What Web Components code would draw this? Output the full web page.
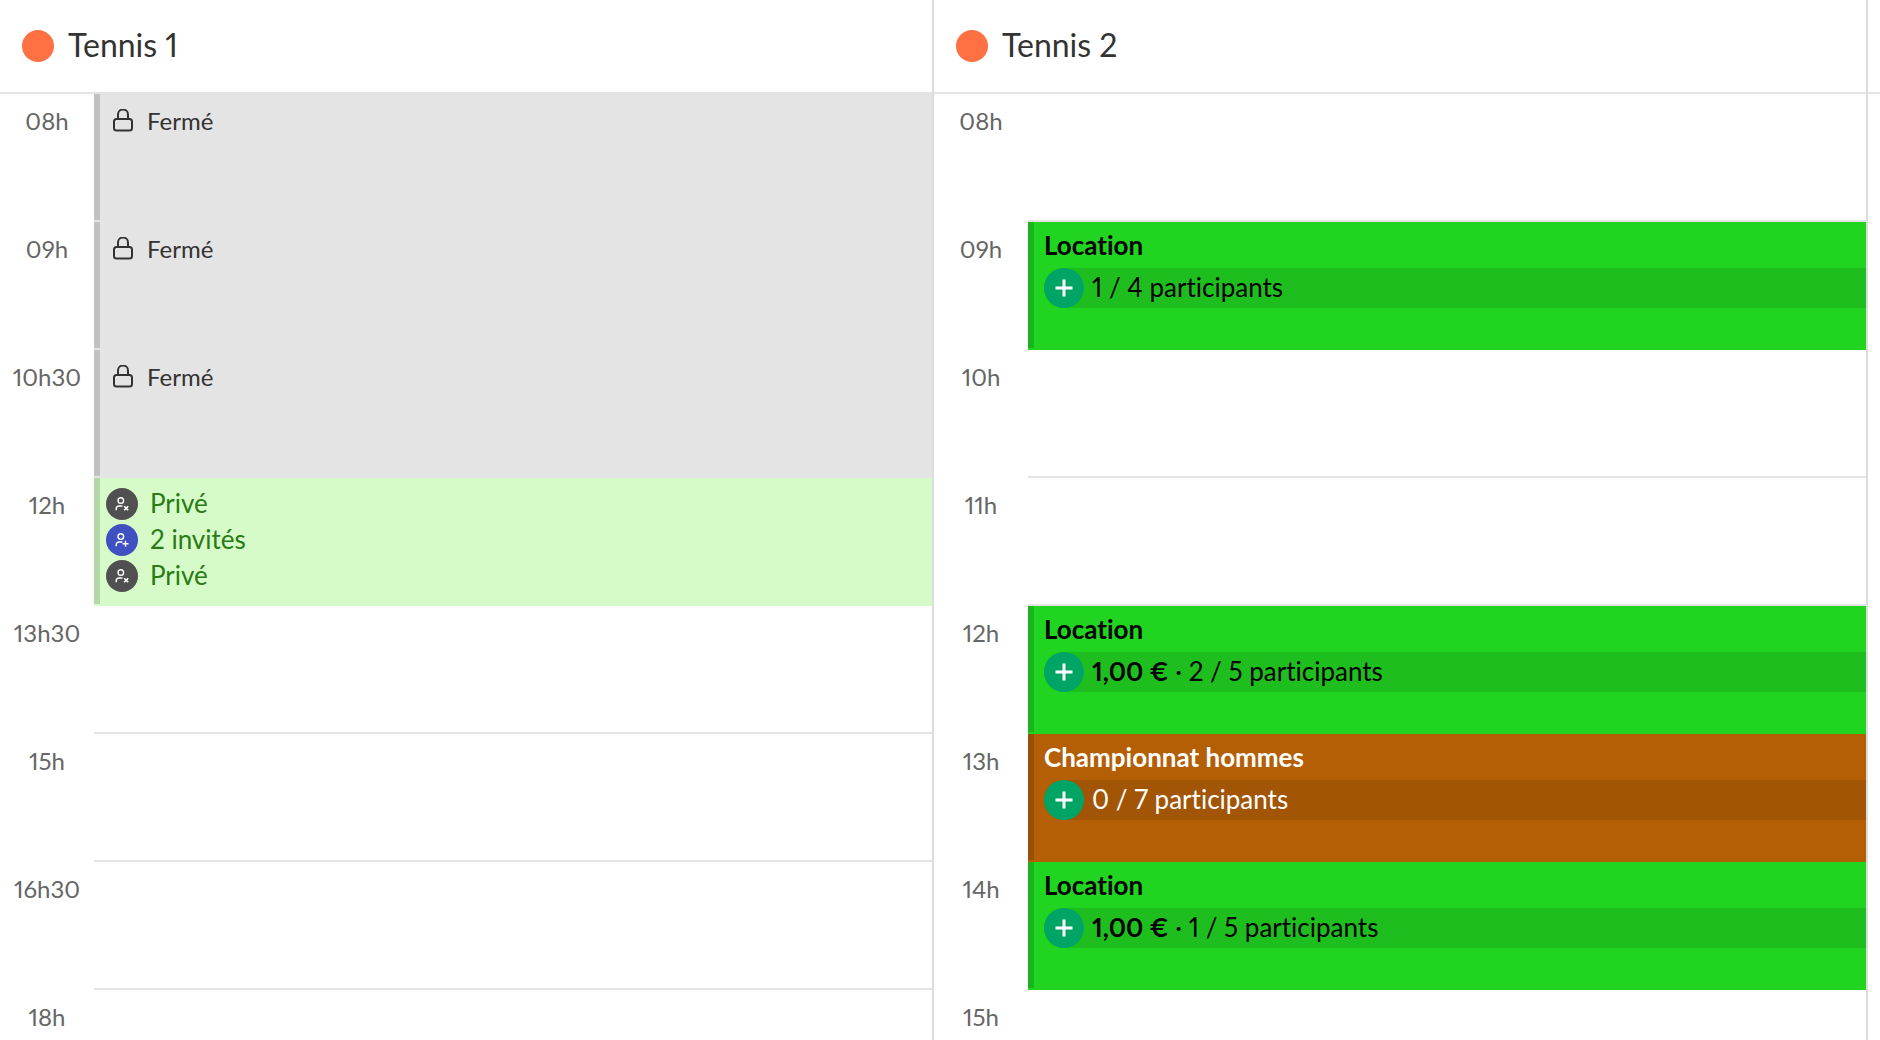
<!DOCTYPE html>
<html lang="fr">
<head>
<meta charset="utf-8">
<title>Planning des courts</title>
<style>
  html { height: 100%; scrollbar-width: none; }
  body { margin: 0; height: 100%; background: #fff; color: #333; font: 24px/32px Lato, "Liberation Sans", sans-serif; font-variant-ligatures: none; font-variant-numeric: proportional-nums; }
</style>
</head>
<body>
<court-planning>
  <court-column name="Tennis 1">
    <time-slot time="08h" kind="closed"><closed-event>Fermé</closed-event></time-slot>
    <time-slot time="09h" kind="closed"><closed-event>Fermé</closed-event></time-slot>
    <time-slot time="10h30" kind="closed"><closed-event>Fermé</closed-event></time-slot>
    <time-slot time="12h" kind="booked">
      <player-list>
        <player-item kind="private">Privé</player-item>
        <player-item kind="guest">2 invités</player-item>
        <player-item kind="private">Privé</player-item>
      </player-list>
    </time-slot>
    <time-slot time="13h30"></time-slot>
    <time-slot time="15h"></time-slot>
    <time-slot time="16h30"></time-slot>
    <time-slot time="18h"></time-slot>
  </court-column>
  <court-column name="Tennis 2">
    <time-slot time="08h"></time-slot>
    <time-slot time="09h" kind="rental"><open-event name="Location">1 / 4 participants</open-event></time-slot>
    <time-slot time="10h"></time-slot>
    <time-slot time="11h"></time-slot>
    <time-slot time="12h" kind="rental"><open-event name="Location"><b>1,00 €</b> · 2 / 5 participants</open-event></time-slot>
    <time-slot time="13h" kind="league"><open-event name="Championnat hommes">0 / 7 participants</open-event></time-slot>
    <time-slot time="14h" kind="rental"><open-event name="Location"><b>1,00 €</b> · 1 / 5 participants</open-event></time-slot>
    <time-slot time="15h"></time-slot>
  </court-column>
  <next-column></next-column>
</court-planning>
<script>
  const define = (name, render) => customElements.define(name, class extends HTMLElement {
    constructor() {
      super();
      this.attachShadow({ mode: "open" });
    }
    connectedCallback() {
      this.shadowRoot.innerHTML = render(this);
    }
  });

  define("court-planning", () => `
    <style>
      :host { display: flex; align-items: stretch; min-height: 100%; }
    </style>
    <slot></slot>`);

  define("court-column", el => `
    <style>
      :host { display: flex; flex-direction: column; flex: 1 1 0; min-width: 0; border-right: 2px solid #dcdcdc; }
      header { display: flex; align-items: center; gap: 14px; height: 92px; padding: 0 22px; border-bottom: 2px solid #e4e4e4; }
      .dot { width: 32px; height: 32px; border-radius: 50%; background: #ff7043; }
      h2 { margin: 0; padding-bottom: 2px; font-size: 32px; line-height: 40px; font-weight: 400; }
    </style>
    <header><span class="dot"></span><h2>${el.getAttribute("name")}</h2></header>
    <slot></slot>`);

  define("next-column", () => `
    <style>
      :host { display: block; flex: 0 0 12px; }
      div { height: 92px; border-bottom: 2px solid #e4e4e4; }
    </style>
    <div></div>`);

  define("time-slot", el => `
    <style>
      :host { display: flex; --fill: #fff; --edge: #fff; --line: #e4e4e4; }
      :host([kind="closed"]) { --fill: #e4e4e4; --edge: #c1c1c1; }
      :host([kind="booked"]) { --fill: #d6fac8; --edge: #b3d8a8; --line: #d6fac8; color: #2a7a16; }
      :host([kind="rental"]) { --fill: #20d420; --edge: #1cb41c; --line: #20d420; --strip: #1fbe1f; color: #000; }
      :host([kind="league"]) { --fill: #b45f06; --edge: #985005; --line: #b45f06; --strip: #a25505; color: #fff; }
      time { width: 94px; padding-top: 11px; text-align: center; color: #666; }
      .body { box-sizing: border-box; flex: 1; min-width: 0; height: 128px; background: linear-gradient(var(--edge), var(--edge)) 0 0 / 6px 126px no-repeat var(--fill); border-bottom: 2px solid var(--line); padding-left: 6px; }
    </style>
    <time>${el.getAttribute("time")}</time>
    <div class="body"><slot></slot></div>`);

  define("closed-event", () => `
    <style>
      :host { display: flex; align-items: center; gap: 13px; padding: 11px 12px 0; }
      svg { display: block; width: 22px; height: 24px; }
    </style>
    <svg viewBox="0 0 22 24" fill="none" stroke="#333" stroke-width="2" aria-hidden="true">
      <rect x="2" y="10" width="18" height="11.500" rx="2.5"/>
      <path d="M6 10V5.500a5 5 0 0 1 10 0V10"/>
    </svg>
    <span><slot></slot></span>`);

  define("player-list", () => `
    <style>
      :host { display: flex; flex-direction: column; gap: 4px; padding: 10px 6px 0; }
    </style>
    <slot></slot>`);

  define("player-item", el => `
    <style>
      :host { display: flex; align-items: center; gap: 12px; height: 32px; font-size: 26px; }
      svg { display: block; width: 32px; height: 32px; border-radius: 50%; background: #505050; }
      :host([kind="guest"]) svg { background: #3f51c0; }
      span { padding-bottom: 2px; }
    </style>
    <svg viewBox="0 0 32 32" fill="none" stroke="#fff" stroke-width="1.4" aria-hidden="true">
      <circle cx="14.8" cy="12.6" r="2.8"/>
      <path d="M10.2 22.2v-1.2a3 3 0 0 1 3-3h3.2"/>
      ${el.getAttribute("kind") === "guest"
        ? '<path d="M19.5 16.8v6M16.5 19.8h6"/>'
        : '<path d="M18.2 18.3l4 4M22.2 18.3l-4 4" stroke-width="1.6"/>'}
    </svg>
    <span><slot></slot></span>`);

  define("open-event", el => `
    <style>
      :host { display: block; padding: 7px 0 0 10px; font-size: 26px; }
      h3 { margin: 0 0 7px; font-size: 26px; line-height: 32px; font-weight: 700; }
      .strip { display: flex; align-items: center; gap: 8px; height: 40px; background: var(--strip); border-radius: 20px 0 0 20px; }
      button { display: block; width: 40px; height: 40px; padding: 0; border: 0; border-radius: 50%; background: #00a565; cursor: pointer; }
      svg { display: block; width: 40px; height: 40px; }
      span { padding-bottom: 2px; }
    </style>
    <h3>${el.getAttribute("name")}</h3>
    <div class="strip">
      <button type="button" aria-label="Rejoindre"><svg viewBox="0 0 40 40" fill="none" stroke="#fff" stroke-width="3" aria-hidden="true"><path d="M20 11.500v17M11.500 20h17"/></svg></button>
      <span><slot></slot></span>
    </div>`);
</script>
</body>
</html>
